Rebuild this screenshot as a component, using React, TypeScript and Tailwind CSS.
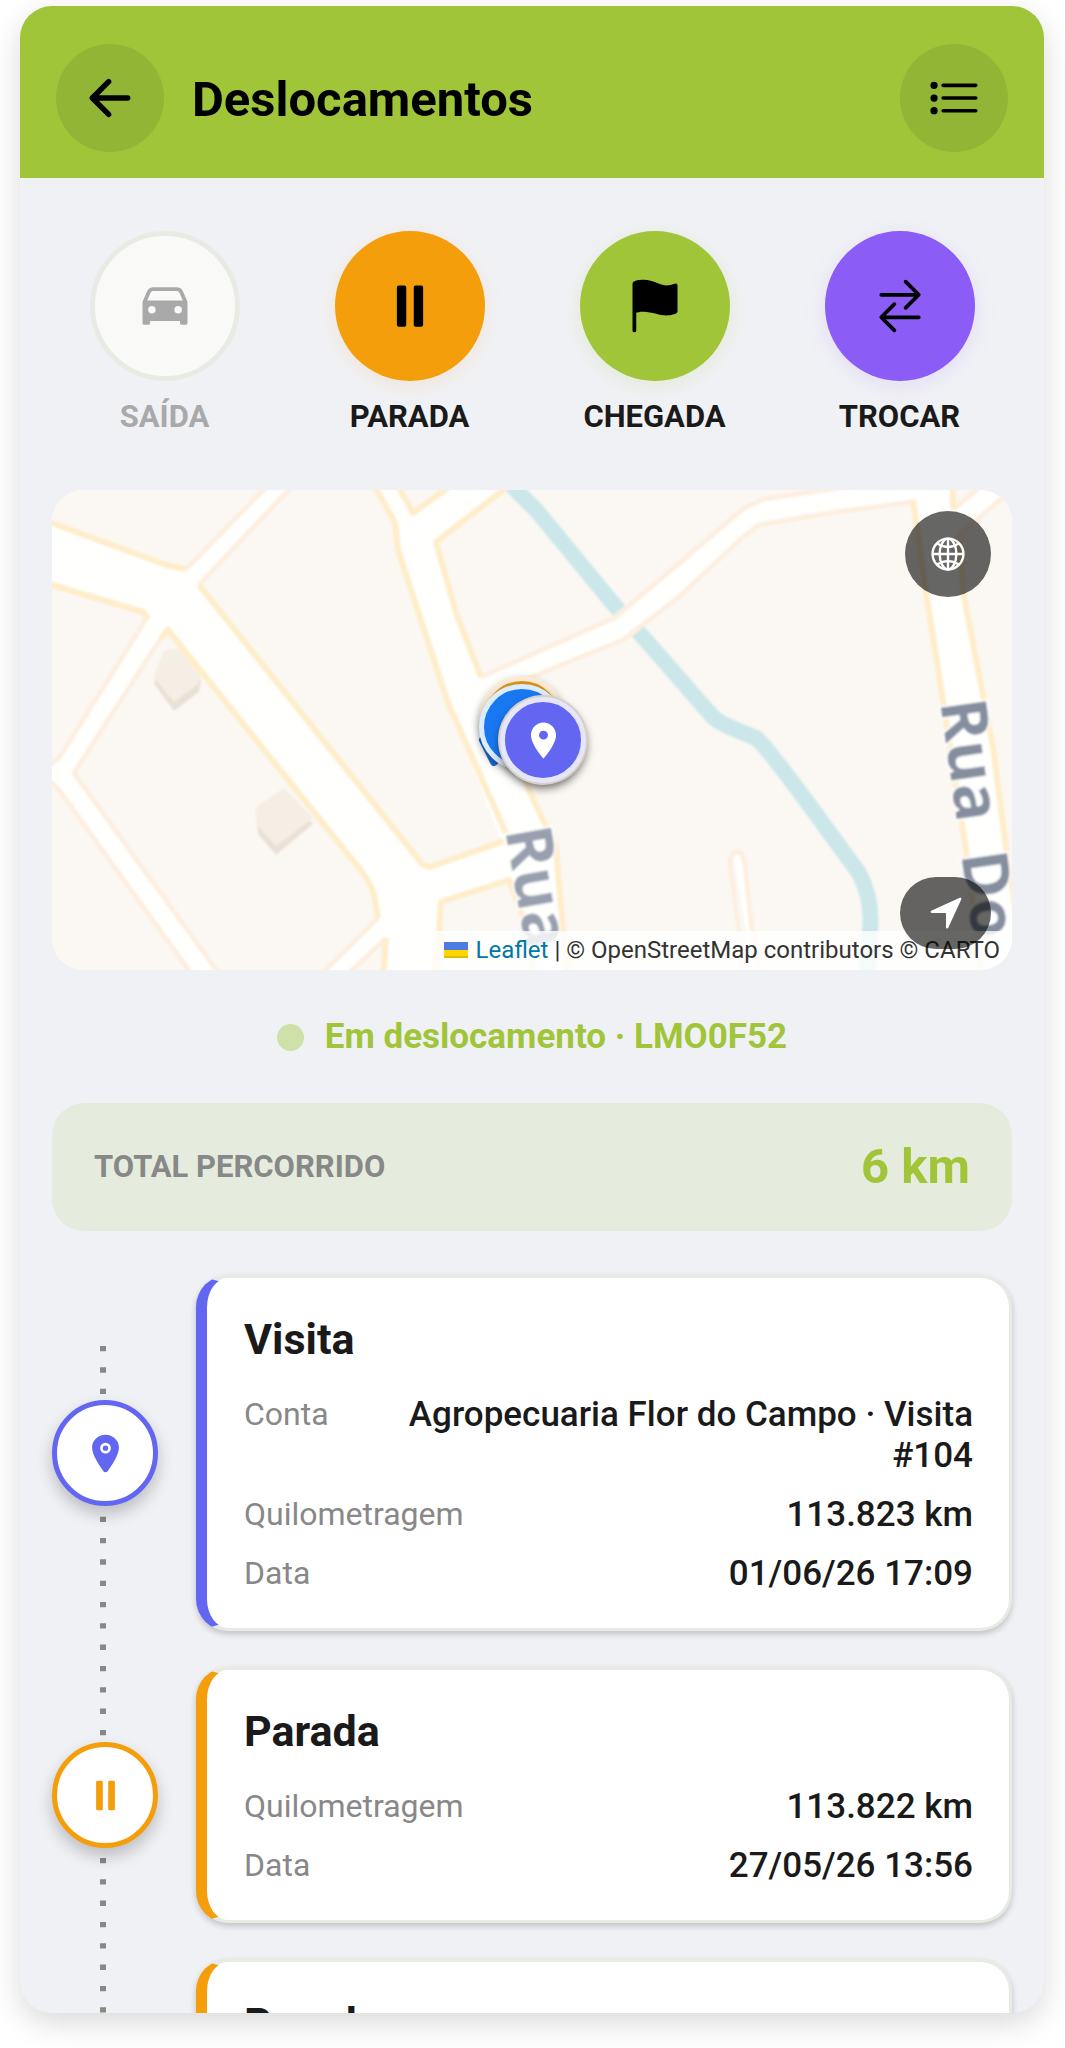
import type { ReactNode } from "react";
import {
  IoArrowBack,
  IoCar,
  IoFlag,
  IoGlobeOutline,
  IoListOutline,
  IoLocation,
  IoNavigate,
  IoPause,
  IoSwapHorizontal,
} from "react-icons/io5";
import { MdLocationOn } from "react-icons/md";

type EventKind = "visita" | "parada";

interface TripEvent {
  id: number;
  kind: EventKind;
  title: string;
  rows: { label: string; value: string }[];
}

const events: TripEvent[] = [
  {
    id: 3,
    kind: "visita",
    title: "Visita",
    rows: [
      { label: "Conta", value: "Agropecuaria Flor do Campo · Visita #104" },
      { label: "Quilometragem", value: "113.823 km" },
      { label: "Data", value: "01/06/26 17:09" },
    ],
  },
  {
    id: 2,
    kind: "parada",
    title: "Parada",
    rows: [
      { label: "Quilometragem", value: "113.822 km" },
      { label: "Data", value: "27/05/26 13:56" },
    ],
  },
  {
    id: 1,
    kind: "parada",
    title: "Parada",
    rows: [
      { label: "Quilometragem", value: "113.821 km" },
      { label: "Data", value: "27/05/26 13:40" },
    ],
  },
];

function Header() {
  return (
    <header className="flex shrink-0 items-center bg-[#a0c538] px-9 pt-[38px] pb-[26px]">
      <button
        type="button"
        aria-label="Voltar"
        className="flex size-[108px] items-center justify-center rounded-full bg-[#93b536]"
      >
        <IoArrowBack size={58} />
      </button>
      <h1 className="ml-7 flex-1 pt-1 text-[49px] leading-[56px] font-bold text-black">
        Deslocamentos
      </h1>
      <button
        type="button"
        aria-label="Lista"
        className="flex size-[108px] items-center justify-center rounded-full bg-[#93b536]"
      >
        <IoListOutline size={58} />
      </button>
    </header>
  );
}

interface ActionProps {
  label: string;
  icon: ReactNode;
  circleClass: string;
  disabled?: boolean;
}

function Action({ label, icon, circleClass, disabled }: ActionProps) {
  return (
    <button
      type="button"
      disabled={disabled}
      className={`flex flex-1 flex-col items-center gap-[18px] ${
        disabled ? "text-[#a9a9a9]" : "text-[#1a1a1a]"
      }`}
    >
      <span
        className={`flex size-[150px] items-center justify-center rounded-full ${circleClass}`}
      >
        {icon}
      </span>
      <span className="text-[31px] leading-9 font-bold">{label}</span>
    </button>
  );
}

function Actions() {
  return (
    <div className="flex gap-5">
      <Action
        label="SAÍDA"
        disabled
        icon={<IoCar size={60} />}
        circleClass="border-[5px] border-[#e8ebe4] bg-[#f9faf8]"
      />
      <Action
        label="PARADA"
        icon={<IoPause size={60} className="text-black" />}
        circleClass="bg-[#f59e0b] shadow-[0_5px_21px_rgba(245,158,11,0.12)]"
      />
      <Action
        label="CHEGADA"
        icon={<IoFlag size={60} className="text-black" />}
        circleClass="bg-[#a0c538] shadow-[0_5px_21px_rgba(160,197,56,0.15)]"
      />
      <Action
        label="TROCAR"
        icon={<IoSwapHorizontal size={60} className="text-black" />}
        circleClass="bg-[#8b5cf6] shadow-[0_5px_21px_rgba(139,92,246,0.13)]"
      />
    </div>
  );
}

function MapTiles() {
  return (
    <svg
      viewBox="0 0 960 480"
      preserveAspectRatio="xMidYMid slice"
      className="absolute inset-0 size-full"
      aria-hidden="true"
    >
      <defs>
        <filter id="soft" x="-5%" y="-5%" width="110%" height="110%">
          <feGaussianBlur stdDeviation="1.3" />
        </filter>
      </defs>
      <rect width="960" height="480" fill="#fffffd" />
      <g filter="url(#soft)">
        {/* quarteirões */}
        <g fill="#fbf8f3">
          <path d="M-9 -9V30L0 33L114 75L134 79L220 -9Z" />
          <path d="M245 -9L147 95L371 378L450 353L396 213L346 60L343 33L320 -9Z" />
          <path d="M343 -9L361 23L405 -9Z" />
          <path d="M463 -9L384 52L404 123L429 187L562 128L612 86L692 18L712 9L765 1V-9Z" />
          <path d="M441 203L571 150L627 107L691 47L707 35L777 23L861 12L874 103L891 210L914 360L930 490H516L511 440L504 357L491 330L477 300Z" />
          <path d="M901 -9V19L935 -9Z" />
          <path d="M970 -9L907 45L912 107L932 210L941 257L954 357L970 420Z" />
          <path d="M-9 92L0 95L96 125L91 134L7 268L-9 280Z" />
          <path d="M116 140L109 148L22 283L171 489H264L326 428L322 403Z" />
          <path d="M-9 285L7 300L143 489H-9Z" />
          <path d="M291 489L334 448L331 489Z" />
          <path d="M384 489L389 412L457 390L472 430L484 489Z" />
        </g>
        {/* córrego */}
        <path
          d="M455 -9L484 20L564 117L591 147L661 227Q668 234 704 248Q714 256 761 320L807 383Q821 410 818 440L815 489"
          fill="none"
          stroke="#cbe7ea"
          strokeWidth="16"
        />
        <path
          d="M515 165L567 139L619 97"
          fill="none"
          stroke="#fffffd"
          strokeWidth="22"
        />
        <path
          d="M698 489L694 440L682 369Q684 358 691 368L697 400L706 489"
          fill="#fffffd"
        />
        {/* construções */}
        <g fill="#e9e1d6">
          <path d="M112 164L131 162L149 191L147 202L122 221L102 194L104 184Z" />
          <path d="M232 302L261 334L224 365L206 344L204 321Z" />
        </g>
        <g fill="#f5eee4">
          <path d="M112 160L131 158L149 185L146 194L122 212L102 188L104 180Z" />
          <path d="M232 298L261 328L224 356L206 336L204 317Z" />
        </g>
        {/* bordas das vias locais */}
        <g fill="none" stroke="#fdefe0" strokeWidth="5" strokeLinejoin="round">
          <path d="M134 79L220 -9M245 -9L147 95" />
          <path d="M429 187L562 128L612 86L692 18L712 9L765 1L800 -4" />
          <path d="M441 203L571 150L627 107L691 47L707 35L777 23L861 12" />
          <path d="M96 125L91 134L7 268L-9 280M109 148L22 283L171 489" />
          <path d="M-9 285L7 300L143 489M264 489L326 428M291 489L334 448" />
          <path d="M902 19L935 -9M970 -9L907 45" />
          <path d="M692 489L687 440L678 375Q678 362 685 362Q692 362 693 375L700 440L706 489" />
        </g>
        {/* bordas das vias principais */}
        <g fill="none" stroke="#ffedca" strokeWidth="6" strokeLinejoin="round">
          <path d="M-9 30L0 33L114 75L134 79M-9 92L0 95L91 122L96 129" />
          <path d="M147 95L371 375L378 377L452 351M109 148L116 140L310 382Q323 400 323 412L326 428M334 448L331 489" />
          <path d="M320 -9L343 33L346 60L396 213L454 343" />
          <path d="M343 -9L361 23L405 -9M463 -9L384 52L404 123L429 187" />
          <path d="M441 203L477 300L491 330L504 357L511 440L516 489" />
          <path d="M384 489L389 412L457 390L472 430L484 489" />
          <path d="M861 10L874 103L891 210L914 360L930 489" />
          <path d="M901 -9V19M907 45L912 107L932 210L941 257L954 357L970 460" />
        </g>
        {/* nomes das ruas */}
        <g
          fontFamily="'Open Sans', 'Noto Sans', sans-serif"
          fontSize="64"
          fontWeight="700"
          stroke="#ffffff"
          strokeWidth="4"
          paintOrder="stroke"
        >
          <text transform="translate(453 340) rotate(80)" fill="#98a0af">
            Rua
          </text>
          <text transform="translate(888 212) rotate(82)" fill="#858e9e">
            Rua
          </text>
          <text transform="translate(909 364) rotate(82)" fill="#858e9e">
            Do
          </text>
        </g>
      </g>
      {/* trajeto percorrido */}
      <path
        d="M431 250L442 272"
        stroke="#1d70d8"
        strokeWidth="8"
        strokeLinecap="round"
      />
    </svg>
  );
}

function RouteMap() {
  return (
    <section
      aria-label="Mapa"
      className="relative mt-[55px] h-[480px] overflow-hidden rounded-[32px] bg-white"
    >
      <MapTiles />

      {/* marcadores */}
      <div className="absolute top-1/2 left-1/2">
        <span className="absolute -top-[54px] -left-[53px] size-[86px] rounded-full border-[5px] border-[#fcecd4] bg-[#e3981b] shadow-[0_3px_8px_rgba(0,0,0,0.25)]" />
        <span className="absolute -top-[46px] -left-[53px] size-[86px] rounded-full border-[5px] border-[#dcebfd] bg-[#1878f2] shadow-[0_3px_8px_rgba(0,0,0,0.35)]" />
        <span className="absolute -top-[33px] -left-[32px] flex size-[86px] items-center justify-center rounded-full border-[5px] border-[#e6e6fb] bg-[#6366f1] text-white shadow-[0_0_0_2px_#d8cfc6,0_5px_10px_rgba(0,0,0,0.6)]">
          <MdLocationOn size={43} />
        </span>
      </div>

      <div className="absolute right-0 bottom-0 flex h-[39px] items-center bg-white/80 pr-3 pb-[2px] pl-[10px] text-[24px] leading-8 text-[#333]">
        <a href="#leaflet" className="flex items-center gap-2 text-[#0078a8]">
          <svg viewBox="0 0 12 8" className="h-4 w-6" aria-hidden="true">
            <path fill="#4c7be1" d="M0 0h12v4H0z" />
            <path fill="#ffd500" d="M0 4h12v3H0z" />
            <path fill="#e0bc00" d="M0 7h12v1H0z" />
          </svg>
          Leaflet
        </a>
        <span className="whitespace-pre"> | © OpenStreetMap contributors © CARTO</span>
      </div>

      <button
        type="button"
        aria-label="Camadas do mapa"
        className="absolute top-[21px] right-[21px] flex size-[86px] items-center justify-center rounded-full bg-black/60 text-white"
      >
        <IoGlobeOutline size={38} />
      </button>
      <button
        type="button"
        aria-label="Minha localização"
        className="absolute right-[21px] bottom-[21px] flex h-[72px] w-[91px] items-center justify-center rounded-full bg-black/60 text-white"
      >
        <IoNavigate size={38} />
      </button>
    </section>
  );
}

const kindStyles: Record<EventKind, { border: string; node: string; icon: ReactNode }> = {
  visita: {
    border: "border-l-[#6366f1]",
    node: "border-[#6366f1] text-[#6366f1]",
    icon: <IoLocation size={43} />,
  },
  parada: {
    border: "border-l-[#f59e0b]",
    node: "border-[#f59e0b] text-[#f59e0b]",
    icon: <IoPause size={43} />,
  },
};

function TimelineItem({ event }: { event: TripEvent }) {
  const style = kindStyles[event.kind];

  return (
    <li className="relative flex items-center gap-[38px]">
      <span
        className={`flex size-[106px] shrink-0 items-center justify-center rounded-full border-[5px] bg-white shadow-[0_8px_16px_rgba(0,0,0,0.22)] ${style.node}`}
      >
        {style.icon}
      </span>
      <article
        className={`min-w-0 flex-1 rounded-[32px] border-[3px] border-l-[11px] border-[#e8ebe4] bg-white pt-9 pr-9 pb-[34px] pl-[37px] shadow-[0_3px_6px_rgba(0,0,0,0.2)] ${style.border}`}
      >
        <h2 className="text-[43px] leading-[50px] font-bold text-[#1a1a1a]">
          {event.title}
        </h2>
        <dl className="mt-[30px] flex flex-col gap-[18px]">
          {event.rows.map((row) => (
            <div key={row.label} className="flex justify-between gap-16 leading-[41px]">
              <dt className="text-[32px] text-[#888]">{row.label}</dt>
              <dd className="text-right text-[35px] font-medium text-[#1a1a1a]">
                {row.value}
              </dd>
            </div>
          ))}
        </dl>
      </article>
    </li>
  );
}

function Timeline() {
  return (
    <ol className="relative mt-[44px] flex flex-col gap-9">
      <svg
        className="absolute top-[71px] bottom-0 left-12 h-full w-[6px]"
        aria-hidden="true"
      >
        <line
          x1="3"
          y1="0"
          x2="3"
          y2="100%"
          stroke="#888"
          strokeWidth="6"
          strokeDasharray="5.33 16"
        />
      </svg>
      {events.map((event) => (
        <TimelineItem key={event.id} event={event} />
      ))}
    </ol>
  );
}

export default function App() {
  return (
    <div className="h-screen bg-white pt-[6px] pr-[21px] pb-[35px] pl-5 font-[Roboto,sans-serif]">
      <div className="flex h-full flex-col overflow-hidden rounded-[32px] bg-[#f0f1f5] shadow-[0_10px_30px_rgba(0,0,0,0.15)]">
        <Header />
        <main className="min-h-0 flex-1 overflow-hidden px-8 pt-[53px]">
          <Actions />
          <RouteMap />

          <p className="mt-[46px] flex items-center justify-center gap-[21px] text-[35px] leading-[42px] font-bold text-[#a0c538]">
            <span className="size-[27px] rounded-full bg-[#cfe1a9]" />
            Em deslocamento · LMO0F52
          </p>

          <div className="mt-[45px] flex h-32 items-center justify-between rounded-[32px] bg-[#e6ecdd] px-[42px]">
            <span className="text-[31px] font-bold text-[#888]">TOTAL PERCORRIDO</span>
            <span className="text-[49px] font-bold text-[#a0c538]">6 km</span>
          </div>

          <Timeline />
        </main>
      </div>
    </div>
  );
}
